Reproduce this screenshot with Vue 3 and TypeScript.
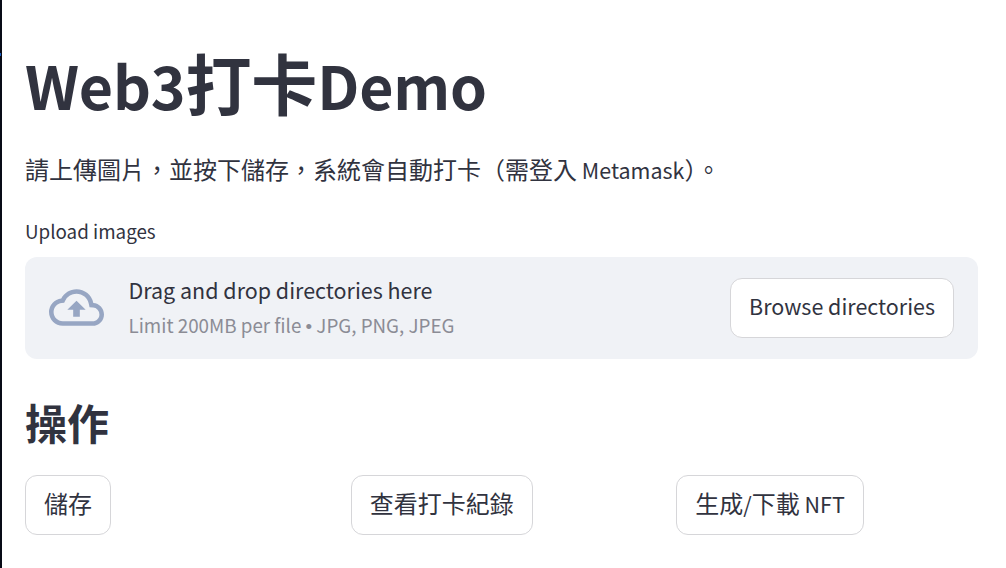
<template>
  <div class="app">
    <aside class="edge"><i class="edge-mark"></i></aside>
    <main class="main">
      <h1 class="title"><span class="latin">Web3</span>打卡<span class="latin">Demo</span></h1>
      <p class="intro">
        請上傳圖片，並按下儲存，系統會自動打卡（需登入<span class="latin">&nbsp;Metamask</span>）。
      </p>

      <label class="label">Upload images</label>
      <section class="dropzone" @dragover.prevent @drop.prevent="onDrop">
        <svg class="cloud" viewBox="0 0 24 24" fill="currentColor">
          <path
            d="M19.35 10.04A7.49 7.49 0 0012 4C9.11 4 6.6 5.64 5.35 8.04A5.994 5.994 0 000 14c0 3.31 2.69 6 6 6h13c2.76 0 5-2.24 5-5 0-2.64-2.05-4.78-4.65-4.96zM19 18H6c-2.21 0-4-1.79-4-4 0-2.05 1.53-3.76 3.56-3.97l1.07-.11.5-.95A5.469 5.469 0 0112 6c2.62 0 4.88 1.86 5.39 4.43l.3 1.5 1.53.11A2.98 2.98 0 0122 15c0 1.65-1.35 3-3 3zM8 13h2.55v3h2.9v-3H16l-4-4z"
          />
        </svg>
        <div class="hints">
          <span class="hint">Drag and drop directories here</span>
          <small class="limit">Limit 200MB per file <span class="bullet">•</span> {{ fileTypes.join(', ') }}</small>
        </div>
        <button class="button browse" @click="picker?.click()">Browse directories</button>
        <input ref="picker" class="picker" type="file" webkitdirectory multiple @change="onPick" />
      </section>

      <h2 class="subtitle">操作</h2>
      <div class="actions">
        <div class="column">
          <button class="button">儲存</button>
        </div>
        <div class="column">
          <button class="button">查看打卡紀錄</button>
        </div>
        <div class="column">
          <button class="button">生成<span class="latin">/</span>下載<span class="latin">&nbsp;NFT</span></button>
        </div>
      </div>
    </main>
  </div>
</template>

<script setup lang="ts">
import { ref } from 'vue';

const fileTypes = ['JPG', 'PNG', 'JPEG'];

const picker = ref<HTMLInputElement | null>(null);
const files = ref<File[]>([]);

function onPick(event: Event) {
  files.value = Array.from((event.target as HTMLInputElement).files ?? []);
}

function onDrop(event: DragEvent) {
  files.value = Array.from(event.dataTransfer?.files ?? []);
}
</script>

<style>
body {
  background: #fff;
  overflow: hidden;
}
</style>

<style scoped>
.app {
  display: flex;
  height: 568px;
  color: #31333f;
  font-family: 'Noto Sans CJK TC', sans-serif;
  font-size: 24px;
}

.edge {
  flex: none;
  width: 2px;
  background: #080b16;
}

.edge-mark {
  display: block;
  width: 1px;
  height: 3px;
  margin-top: 53px;
  background: #1a5fc4;
}

.main {
  flex: 1;
  padding: 42px 28px 0 23px;
}

/* Latin glyphs of the CJK face run large next to the ideographs */
.latin {
  font-size: 0.895em;
}

.title {
  margin: 0;
  font-size: 66px;
  font-weight: 700;
  line-height: 79px;
  letter-spacing: -0.18px;
}

.intro {
  margin: 26px 0 0;
  line-height: 38px;
  white-space: nowrap;
}

.label {
  display: block;
  margin-top: 26px;
  font-size: 18.8px;
  line-height: 32px;
}

.dropzone {
  display: flex;
  align-items: center;
  box-sizing: border-box;
  height: 102px;
  margin-top: 10px;
  padding: 0 24px;
  border-radius: 12px;
  background: #f0f2f6;
}

.cloud {
  width: 55px;
  height: 55px;
  margin-right: 24.5px;
  margin-bottom: 1px;
  color: #97a6c3;
}

.hints {
  display: flex;
  flex: 1;
  flex-direction: column;
  padding-bottom: 2px;
}

.hint {
  font-size: 21.47px;
  line-height: 38px;
}

.limit {
  color: #8b8c95;
  font-size: 18.8px;
  line-height: 32px;
}

.bullet {
  font-family: 'Liberation Sans', sans-serif;
}

.picker {
  display: none;
}

.button {
  box-sizing: border-box;
  height: 60px;
  padding: 0 18px 6px;
  border: 1px solid #d6d6d9;
  border-radius: 12px;
  background: #fff;
  color: inherit;
  font: inherit;
  white-space: nowrap;
  cursor: pointer;
}

.button:hover {
  border-color: #ff4b4b;
  color: #ff4b4b;
}

.browse {
  font-size: 21.48px;
}

.subtitle {
  margin: 38px 0 0;
  font-size: 42px;
  font-weight: 700;
  line-height: 50px;
}

.actions {
  display: grid;
  grid-template-columns: repeat(3, 1fr);
  gap: 24px;
  margin-top: 28px;
}
</style>
